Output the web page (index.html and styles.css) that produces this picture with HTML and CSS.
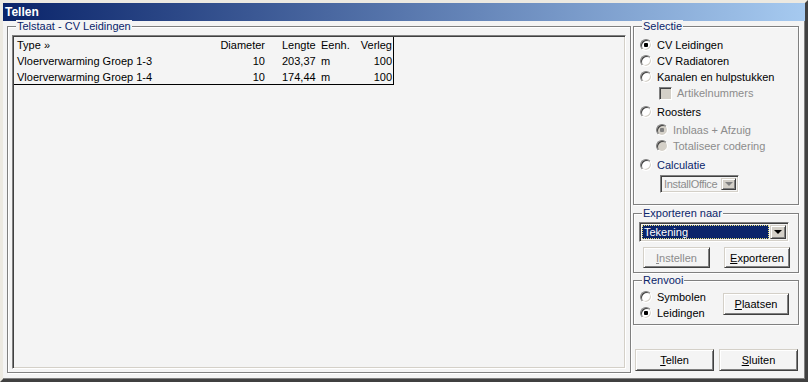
FILE: index.html
```html
<!DOCTYPE html>
<html>
<head>
<meta charset="UTF-8">
<title>Tellen</title>
<link rel="stylesheet" href="styles.css">
</head>
<body>
  <div class="window">
    <div class="titlebar">Tellen</div>
    <div class="content">

      <div class="group group-main">
        <span class="legend">Telstaat - CV Leidingen</span>
        <div class="listbox">
          <div class="grid">
            <div class="row">
              <div class="c-type">Type &raquo;</div>
              <div class="c-diam">Diameter</div>
              <div class="c-len">Lengte</div>
              <div class="c-unit">Eenh.</div>
              <div class="c-verl">Verleg</div>
            </div>
            <div class="row">
              <div class="c-type">Vloerverwarming Groep 1-3</div>
              <div class="c-diam">10</div>
              <div class="c-len">203,37</div>
              <div class="c-unit">m</div>
              <div class="c-verl">100</div>
            </div>
            <div class="row last">
              <div class="c-type">Vloerverwarming Groep 1-4</div>
              <div class="c-diam">10</div>
              <div class="c-len">174,44</div>
              <div class="c-unit">m</div>
              <div class="c-verl">100</div>
            </div>
          </div>
        </div>
      </div>

      <div class="side">
        <div class="group group-sel">
          <span class="legend">Selectie</span>
          <div class="opt"><span class="radio checked"></span>CV Leidingen</div>
          <div class="opt"><span class="radio"></span>CV Radiatoren</div>
          <div class="opt"><span class="radio"></span>Kanalen en hulpstukken</div>
          <div class="opt sub-check disabled"><span class="check"></span>Artikelnummers</div>
          <div class="opt gap3"><span class="radio"></span>Roosters</div>
          <div class="opt sub gap2 disabled"><span class="radio off dot"></span>Inblaas + Afzuig</div>
          <div class="opt sub disabled"><span class="radio off"></span>Totaliseer codering</div>
          <div class="opt gap3 navy"><span class="radio"></span>Calculatie</div>
          <div class="combo combo-calc">
            <span class="combo-text">InstallOffice</span>
            <span class="drop drop-off"><i class="tri"></i></span>
          </div>
        </div>

        <div class="group group-exp">
          <span class="legend">Exporteren naar</span>
          <div class="combo combo-exp">
            <span class="combo-text selected">Tekening</span>
            <span class="drop"><i class="tri"></i></span>
          </div>
          <div class="btn-row">
            <button class="btn btn-inst" disabled><u>I</u>nstellen</button>
            <button class="btn btn-exp"><u>E</u>xporteren</button>
          </div>
        </div>

        <div class="group group-ren">
          <span class="legend">Renvooi</span>
          <div class="ren-opts">
            <div class="opt"><span class="radio"></span>Symbolen</div>
            <div class="opt"><span class="radio checked"></span>Leidingen</div>
          </div>
          <button class="btn btn-plaats"><u>P</u>laatsen</button>
        </div>

        <div class="actions">
          <button class="btn btn-main"><u>T</u>ellen</button>
          <button class="btn btn-main"><u>S</u>luiten</button>
        </div>
      </div>

    </div>
  </div>
</body>
</html>
```

FILE: styles.css
```css
* {
  margin: 0;
  padding: 0;
  box-sizing: border-box;
}

html, body {
  background: #d4d0c8;
  font-family: "Liberation Sans", Arial, sans-serif;
  font-size: 11px;
  color: #000;
}

/* venster */
.window {
  width: 808px;
  height: 382px;
  background: #f4f4f4;
  border: 3px solid;
  border-color: #ece9e1 #404040 #404040 #ece9e1;
  box-shadow: inset -1px -1px 0 #808080;
  display: flex;
  flex-direction: column;
}

.titlebar {
  height: 18px;
  line-height: 18px;
  padding-left: 2px;
  font-size: 12px;
  font-weight: bold;
  color: #fff;
  background: linear-gradient(to right, #0a246a, #a6caf0);
}

.content {
  flex: 1;
  display: flex;
  padding: 5px 0 0 4px;
}

/* groepsvakken */
.group {
  position: relative;
  border: 1px solid #808080;
  box-shadow: inset 1px 1px 0 #fff, 1px 1px 0 #fff;
}

.legend {
  position: absolute;
  top: -7px;
  left: 8px;
  padding: 0 1px;
  background: #f4f4f4;
  color: #0a246a;
  line-height: 13px;
}

.group-main {
  width: 624px;
  height: 347px;
}

.listbox {
  margin: 8px 4px 0 4px;
  height: 334px;
  border: 1px solid;
  border-color: #808080 #fff #fff #808080;
  box-shadow: inset 1px 1px 0 #404040, inset -1px -1px 0 #d4d0c8;
  padding: 1px;
}

.grid {
  width: 380px;
  border-right: 1px solid #000;
  border-bottom: 1px solid #000;
}

.row {
  display: grid;
  grid-template-columns: 200px 53px 53px 37px 36px;
  height: 16px;
  line-height: 16px;
  white-space: nowrap;
}

.row.last {
  height: 15px;
}

.c-type { padding-left: 3px; }
.c-diam { text-align: right; padding-right: 2px; }
.c-len { padding-left: 15px; }
.c-unit { padding-left: 1px; }
.c-verl { text-align: right; padding-right: 1px; }

/* rechterkolom */
.side {
  margin-left: 2px;
  width: 166px;
  display: flex;
  flex-direction: column;
}

.group-sel {
  height: 179px;
  padding: 10px 0 0 6px;
}

.opt {
  display: flex;
  align-items: center;
  height: 16px;
  white-space: nowrap;
}

.opt.gap3 { margin-top: 3px; }
.opt.gap2 { margin-top: 2px; }
.opt.sub { padding-left: 16px; }
.opt.sub-check { padding-left: 19px; }
.opt.disabled { color: #8c8c8c; }
.opt.navy { color: #0a246a; }

.radio {
  width: 12px;
  height: 12px;
  margin-right: 5px;
  border-radius: 50%;
  border: 1px solid;
  border-color: #808080 #fff #fff #808080;
  box-shadow: inset 1px 1px 0 #404040, inset -1px -1px 0 #d4d0c8;
  background: #fff;
  flex: none;
}

.radio.checked {
  background: radial-gradient(circle, #000 0, #000 2px, #fff 2.5px);
}

.radio.off {
  background: #d4d0c8;
}

.radio.off.dot {
  background: radial-gradient(circle, #808080 0, #808080 2px, #d4d0c8 2.5px);
}

.check {
  width: 13px;
  height: 13px;
  margin-right: 5px;
  border: 1px solid;
  border-color: #808080 #fff #fff #808080;
  box-shadow: inset 1px 1px 0 #404040, inset -1px -1px 0 #d4d0c8;
  background: #d4d0c8;
  flex: none;
}

/* keuzelijsten */
.combo {
  display: flex;
  border: 1px solid;
  border-color: #808080 #fff #fff #808080;
  box-shadow: inset 1px 1px 0 #404040, inset -1px -1px 0 #d4d0c8;
  padding: 2px;
  background: #f4f4f4;
}

.combo-text {
  flex: 1;
  padding-left: 1px;
  white-space: nowrap;
  overflow: hidden;
}

.combo-calc {
  margin: 2px 0 0 20px;
  width: 79px;
  height: 18px;
  line-height: 12px;
  color: #8c8c8c;
  letter-spacing: -0.3px;
}

.combo-calc .drop {
  width: 15px;
}

.combo-exp {
  width: 150px;
  height: 20px;
  line-height: 14px;
}

.combo-text.selected {
  background: #0a246a;
  color: #fff;
  outline: 1px dotted #e8e07a;
  outline-offset: -1px;
  margin-right: 1px;
  padding-left: 2px;
}

.drop {
  width: 16px;
  flex: none;
  display: flex;
  align-items: center;
  justify-content: center;
  background: #d4d0c8;
  border: 1px solid;
  border-color: #d4d0c8 #404040 #404040 #d4d0c8;
  box-shadow: inset 1px 1px 0 #fff, inset -1px -1px 0 #808080;
}

.tri {
  width: 0;
  height: 0;
  border-left: 4px solid transparent;
  border-right: 4px solid transparent;
  border-top: 4px solid #000;
}

.drop-off .tri {
  border-top-color: #808080;
}

.group-exp {
  margin-top: 8px;
  height: 60px;
  padding: 8px 0 0 5px;
}

/* knoppen */
.btn {
  font: inherit;
  color: #000;
  background: #f4f4f4;
  border: 1px solid;
  border-color: #d4d0c8 #404040 #404040 #d4d0c8;
  box-shadow: inset 1px 1px 0 #fff, inset -1px -1px 0 #808080;
  height: 22px;
}

.btn:disabled {
  color: #8c8c8c;
}

.btn-row {
  display: flex;
  margin-top: 5px;
}

.btn-inst {
  margin-left: 4px;
  width: 67px;
  height: 21px;
}

.btn-exp {
  margin-left: 14px;
  width: 66px;
  height: 21px;
}

.group-ren {
  margin-top: 7px;
  height: 45px;
  padding: 8px 9px 0 6px;
  display: flex;
  align-items: flex-start;
}

.ren-opts {
  flex: 1;
}

.btn-plaats {
  margin-top: 4px;
  width: 66px;
}

.actions {
  margin-top: 24px;
  display: flex;
  gap: 5px;
  padding-left: 2px;
}

.btn-main {
  width: 79px;
}
```
